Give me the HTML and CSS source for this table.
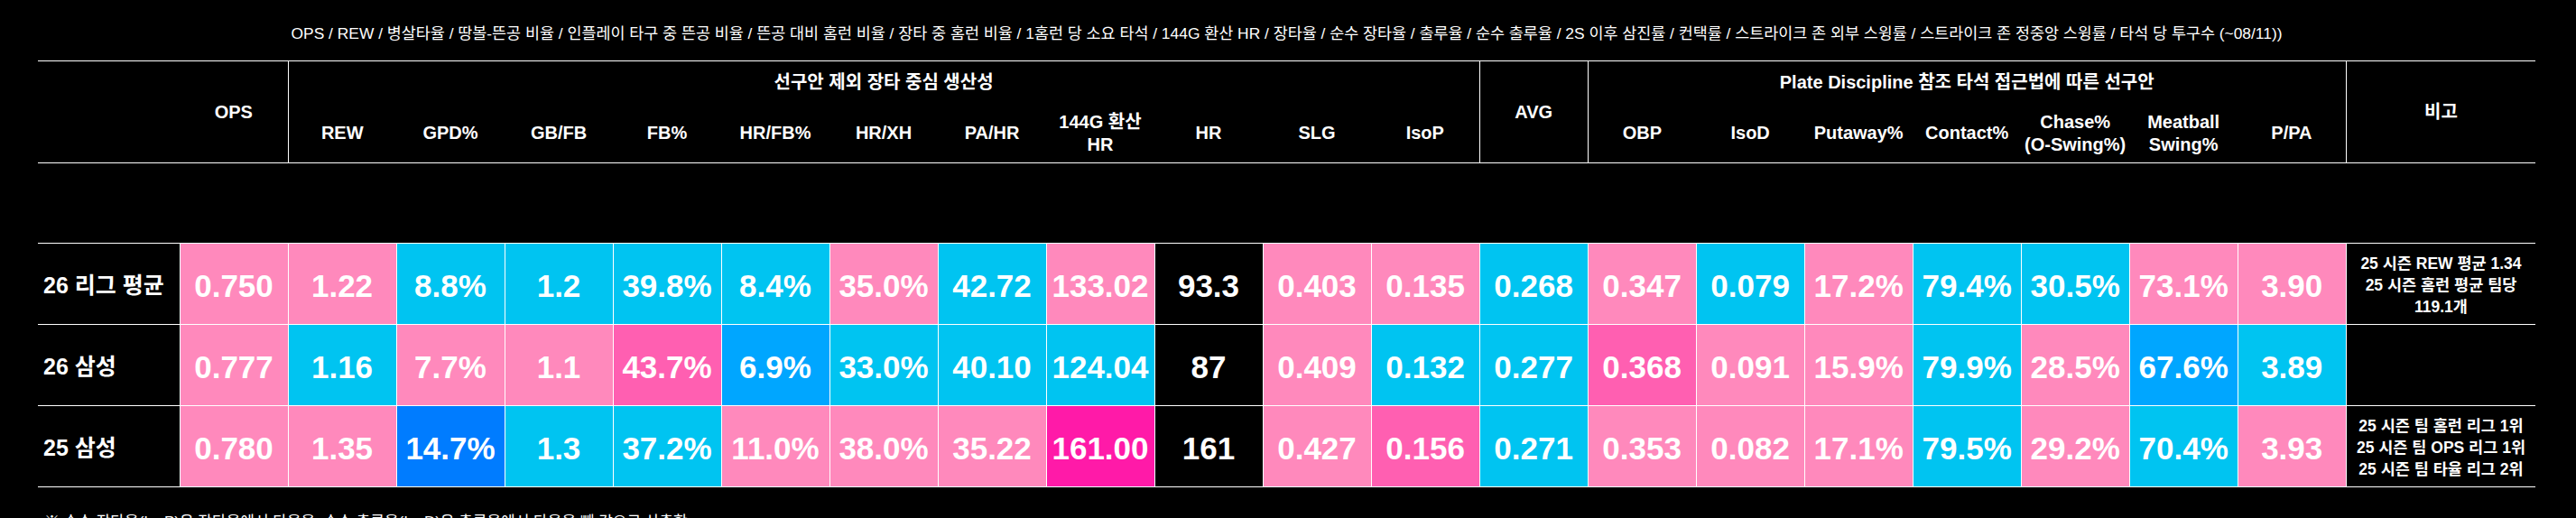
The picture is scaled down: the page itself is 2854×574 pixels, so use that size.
FILE: index.html
```html
<!DOCTYPE html>
<html lang="ko">
<head>
<meta charset="utf-8">
<title>삼성 타격 지표</title>
<link rel="stylesheet" href="styles.css">
</head>
<body>
<div class="page">
  <div class="title">OPS / REW / 병살타율 / 땅볼-뜬공 비율 / 인플레이 타구 중 뜬공 비율 / 뜬공 대비 홈런 비율 / 장타 중 홈런 비율 / 1홈런 당 소요 타석 / 144G 환산 HR / 장타율 / 순수 장타율 / 출루율 / 순수 출루율 / 2S 이후 삼진률 / 컨택률 / 스트라이크 존 외부 스윙률 / 스트라이크 존 정중앙 스윙률 / 타석 당 투구수 (~08/11))</div>
  <table class="stats">
    <colgroup>
      <col class="c-label">
      <col class="c-val"><col class="c-val"><col class="c-val"><col class="c-val"><col class="c-val">
      <col class="c-val"><col class="c-val"><col class="c-val"><col class="c-val"><col class="c-val">
      <col class="c-val"><col class="c-val"><col class="c-val"><col class="c-val"><col class="c-val">
      <col class="c-val"><col class="c-val"><col class="c-val"><col class="c-val"><col class="c-val">
      <col class="c-note">
    </colgroup>
    <thead>
      <tr class="group-row">
        <th class="corner" rowspan="2"></th>
        <th class="solo rb" rowspan="2">OPS</th>
        <th class="group rb" colspan="11">선구안 제외 장타 중심 생산성</th>
        <th class="solo rb" rowspan="2">AVG</th>
        <th class="group rb" colspan="7">Plate Discipline 참조 타석 접근법에 따른 선구안</th>
        <th class="solo note-h" rowspan="2">비고</th>
      </tr>
      <tr class="sub-row">
        <th>REW</th><th>GPD%</th><th>GB/FB</th><th>FB%</th><th>HR/FB%</th><th>HR/XH</th><th>PA/HR</th><th>144G 환산 HR</th><th>HR</th><th>SLG</th><th class="rb">IsoP</th>
        <th>OBP</th><th>IsoD</th><th>Putaway%</th><th>Contact%</th><th>Chase% <span class="nowrap">(O-Swing%)</span></th><th>Meatball Swing%</th><th class="rb">P/PA</th>
      </tr>
    </thead>
    <tbody>
      <tr class="spacer"><td colspan="22"></td></tr>
      <tr class="data">
        <th class="label">26 리그 평균</th>
        <td class="p">0.750</td><td class="p">1.22</td><td class="c">8.8%</td><td class="c">1.2</td><td class="c">39.8%</td><td class="c">8.4%</td><td class="p">35.0%</td><td class="c">42.72</td><td class="p">133.02</td><td class="k">93.3</td><td class="p">0.403</td><td class="p">0.135</td>
        <td class="c">0.268</td>
        <td class="p">0.347</td><td class="c">0.079</td><td class="p">17.2%</td><td class="c">79.4%</td><td class="c">30.5%</td><td class="p">73.1%</td><td class="p">3.90</td>
        <td class="note">25 시즌 REW 평균 1.34<br>25 시즌 홈런 평균 팀당<br>119.1개</td>
      </tr>
      <tr class="data">
        <th class="label">26 삼성</th>
        <td class="p">0.777</td><td class="c">1.16</td><td class="p">7.7%</td><td class="p">1.1</td><td class="hp">43.7%</td><td class="b1">6.9%</td><td class="c">33.0%</td><td class="c">40.10</td><td class="c">124.04</td><td class="k">87</td><td class="p">0.409</td><td class="c">0.132</td>
        <td class="c">0.277</td>
        <td class="hp">0.368</td><td class="p">0.091</td><td class="p">15.9%</td><td class="c">79.9%</td><td class="p">28.5%</td><td class="b1">67.6%</td><td class="c">3.89</td>
        <td class="note"></td>
      </tr>
      <tr class="data">
        <th class="label">25 삼성</th>
        <td class="p">0.780</td><td class="p">1.35</td><td class="b2">14.7%</td><td class="c">1.3</td><td class="c">37.2%</td><td class="p">11.0%</td><td class="p">38.0%</td><td class="p">35.22</td><td class="dp">161.00</td><td class="k">161</td><td class="p">0.427</td><td class="hp">0.156</td>
        <td class="c">0.271</td>
        <td class="p">0.353</td><td class="p">0.082</td><td class="p">17.1%</td><td class="c">79.5%</td><td class="p">29.2%</td><td class="c">70.4%</td><td class="p">3.93</td>
        <td class="note">25 시즌 팀 홈런 리그 1위<br>25 시즌 팀 OPS 리그 1위<br>25 시즌 팀 타율 리그 2위</td>
      </tr>
    </tbody>
  </table>
  <p class="footnote">※ 순수 장타율(IsoP)은 장타율에서 타율을, 순수 출루율(IsoD)은 출루율에서 타율을 뺀 값으로 산출함</p>
</div>
</body>
</html>
```

FILE: styles.css
```css
html, body {
  margin: 0;
  padding: 0;
  background: #000;
}

body {
  color: #fff;
  font-family: "Liberation Sans", "Noto Sans CJK KR", sans-serif;
}

.page {
  padding-left: 42px;
  width: 2767px;
}

.title {
  height: 67px;
  box-sizing: border-box;
  padding-top: 4px;
  display: flex;
  align-items: center;
  justify-content: center;
  font-size: 17.4px;
  white-space: nowrap;
}

.stats {
  border-collapse: collapse;
  table-layout: fixed;
  width: 2767px;
}

.c-label { width: 157px; }
.c-val { width: 120px; }
.c-note { width: 210px; }

.stats th,
.stats td {
  padding: 0;
  text-align: center;
  vertical-align: middle;
  font-weight: bold;
}

.nowrap {
  white-space: nowrap;
}

/* header */
.group-row th {
  border-top: 1px solid #fff;
  height: 47px;
  font-size: 20px;
  line-height: 25px;
}

.group-row th.solo,
.group-row th.corner {
  border-bottom: 1px solid #fff;
}

.sub-row th {
  height: 65px;
  font-size: 20px;
  line-height: 25px;
  border-bottom: 1px solid #fff;
}

.stats th.rb {
  border-right: 1px solid #fff;
}

.note-h {
  padding-bottom: 4px;
}

/* spacer between header and data */
.spacer td {
  height: 88px;
}

/* data rows */
.data th,
.data td {
  height: 85px;
  border-top: 1px solid #fff;
  border-bottom: 1px solid #fff;
  font-size: 35px;
  line-height: 1;
  padding: 4px 0 0;
}

.data td {
  border-left: 1px solid #fff;
  border-right: 1px solid #fff;
}

.data th.label {
  text-align: left;
  padding-left: 6px;
  font-size: 25px;
  background: #000;
}

.data td.note {
  border-right: 0;
  font-size: 17.5px;
  line-height: 24px;
  padding: 2px 0 0;
  background: #000;
}

.p { background: #ff89bc; }
.c { background: #00c4f1; }
.hp { background: #ff5fb1; }
.dp { background: #ff1aa8; }
.b1 { background: #00a6ff; }
.b2 { background: #007cff; }
.k { background: #000; }

.footnote {
  margin: 28px 0 0 7px;
  font-size: 17px;
  line-height: 22px;
}
```
